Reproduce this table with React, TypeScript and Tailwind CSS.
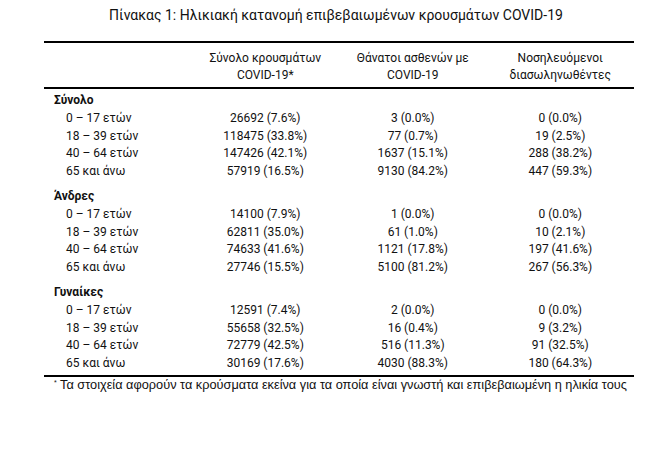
import React from "react";

type Row = [string, string, string, string];

const groups: { name: string; rows: Row[] }[] = [
  {
    name: "Σύνολο",
    rows: [
      ["0 – 17 ετών", "26692 (7.6%)", "3 (0.0%)", "0 (0.0%)"],
      ["18 – 39 ετών", "118475 (33.8%)", "77 (0.7%)", "19 (2.5%)"],
      ["40 – 64 ετών", "147426 (42.1%)", "1637 (15.1%)", "288 (38.2%)"],
      ["65 και άνω", "57919 (16.5%)", "9130 (84.2%)", "447 (59.3%)"],
    ],
  },
  {
    name: "Άνδρες",
    rows: [
      ["0 – 17 ετών", "14100 (7.9%)", "1 (0.0%)", "0 (0.0%)"],
      ["18 – 39 ετών", "62811 (35.0%)", "61 (1.0%)", "10 (2.1%)"],
      ["40 – 64 ετών", "74633 (41.6%)", "1121 (17.8%)", "197 (41.6%)"],
      ["65 και άνω", "27746 (15.5%)", "5100 (81.2%)", "267 (56.3%)"],
    ],
  },
  {
    name: "Γυναίκες",
    rows: [
      ["0 – 17 ετών", "12591 (7.4%)", "2 (0.0%)", "0 (0.0%)"],
      ["18 – 39 ετών", "55658 (32.5%)", "16 (0.4%)", "9 (3.2%)"],
      ["40 – 64 ετών", "72779 (42.5%)", "516 (11.3%)", "91 (32.5%)"],
      ["65 και άνω", "30169 (17.6%)", "4030 (88.3%)", "180 (64.3%)"],
    ],
  },
];

export default function App() {
  return (
    <div
      className="w-[658px] h-[456px] bg-white text-[#111111] overflow-hidden"
      style={{ fontFamily: "Roboto, 'Noto Sans', sans-serif" }}
    >
      <div className="ml-[44px] w-[590px] pt-[6px]">
        <div className="text-center text-[14px] leading-[18px] pr-[6px]">
          Πίνακας 1: Ηλικιακή κατανομή επιβεβαιωμένων κρουσμάτων COVID-19
        </div>
        <div className="mt-[17px] h-[1.5px] bg-black" />
        <div className="grid grid-cols-4 text-[12px] leading-[16.5px] pt-[7.5px] pb-[4px] text-center">
          <div />
          <div>
            Σύνολο κρουσμάτων
            <br />
            COVID-19*
          </div>
          <div>
            Θάνατοι ασθενών με
            <br />
            COVID-19
          </div>
          <div>
            Νοσηλευόμενοι
            <br />
            διασωληνωθέντες
          </div>
        </div>
        <div className="h-[1.5px] bg-black" />
        <div className="pt-[3.5px] pb-[2.5px] text-[12px] leading-[17.8px]">
          {groups.map((g, gi) => (
            <div key={g.name} className={gi > 0 ? "mt-[7px]" : ""}>
              <div className="pl-[10px] font-bold">{g.name}</div>
              {g.rows.map((r) => (
                <div key={r[0]} className="grid grid-cols-4">
                  <div className="pl-[22px]">{r[0]}</div>
                  <div className="text-center">{r[1]}</div>
                  <div className="text-center">{r[2]}</div>
                  <div className="text-center">{r[3]}</div>
                </div>
              ))}
            </div>
          ))}
        </div>
        <div className="h-[1.5px] bg-black" />
        <div
          className="pl-[10px] text-[12.75px] leading-[16px] whitespace-nowrap"
          style={{ fontFamily: "'Liberation Sans', Arial, sans-serif" }}
        >
          <sup className="text-[7px]">*</sup> Τα στοιχεία αφορούν τα κρούσματα εκείνα για τα οποία είναι γνωστή και
          επιβεβαιωμένη η ηλικία τους
        </div>
      </div>
    </div>
  );
}
